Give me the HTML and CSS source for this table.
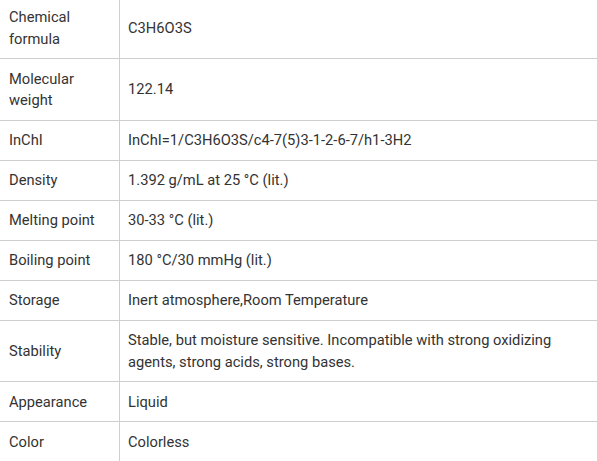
FILE: index.html
```html
<!DOCTYPE html>
<html>
<head>
<meta charset="utf-8">
<link rel="stylesheet" href="styles.css">
</head>
<body>
<table class="props">
<tbody>
<tr><td class="k">Chemical formula</td><td class="v">C3H6O3S</td></tr>
<tr><td class="k">Molecular weight</td><td class="v">122.14</td></tr>
<tr><td class="k">InChI</td><td class="v">InChI=1/C3H6O3S/c4-7(5)3-1-2-6-7/h1-3H2</td></tr>
<tr><td class="k">Density</td><td class="v">1.392 g/mL at 25 °C (lit.)</td></tr>
<tr><td class="k">Melting point</td><td class="v">30-33 °C (lit.)</td></tr>
<tr><td class="k">Boiling point</td><td class="v">180 °C/30 mmHg (lit.)</td></tr>
<tr><td class="k">Storage</td><td class="v">Inert atmosphere,Room Temperature</td></tr>
<tr><td class="k">Stability</td><td class="v">Stable, but moisture sensitive. Incompatible with strong oxidizing agents, strong acids, strong bases.</td></tr>
<tr><td class="k">Appearance</td><td class="v">Liquid</td></tr>
<tr><td class="k">Color</td><td class="v">Colorless</td></tr>
</tbody>
</table>
</body>
</html>
```
FILE: styles.css
```css
html, body {
  margin: 0;
  padding: 0;
  background: #fff;
}
body {
  font-family: Roboto, "Liberation Sans", Arial, sans-serif;
  font-size: 14.7px;
  line-height: 21.5px;
  color: #333;
  overflow: hidden;
}
.props {
  border-collapse: collapse;
  width: 597px;
  margin-top: -3.5px;
  table-layout: fixed;
}
.props td {
  border-top: 1px solid #cfcfcf;
  border-bottom: 1px solid #cfcfcf;
  padding: 9.5px 9px 8px 9px;
  vertical-align: middle;
  text-align: left;
}
.props td.k {
  width: 101px;
  border-right: 1px solid #cfcfcf;
}
.props td.v {
  padding-left: 8px;
  padding-right: 20px;
}
```
